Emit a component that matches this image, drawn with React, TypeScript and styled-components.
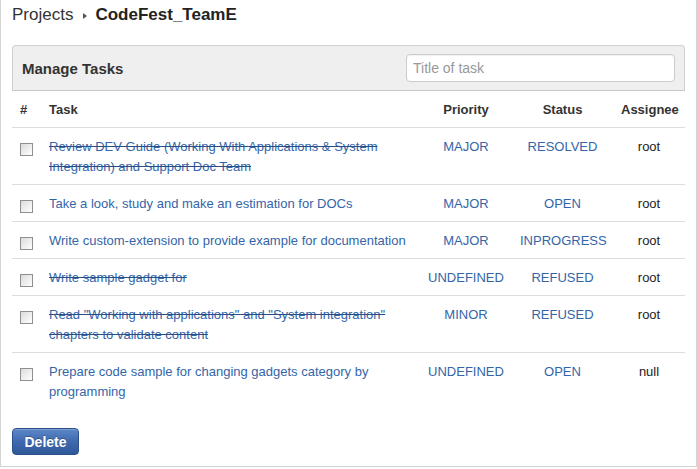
import styled, { createGlobalStyle } from 'styled-components';

const GlobalStyle = createGlobalStyle`
  html, body {
    margin: 0;
    padding: 0;
    background: #fff;
  }
  body {
    font-family: "Liberation Sans", Arial, sans-serif;
    color: #333;
  }
`;

const Frame = styled.div`
  box-sizing: border-box;
  width: 697px;
  height: 467px;
  border: 1px solid #d4d4d4;
  border-top: none;
  padding: 0 11px;
`;

const Breadcrumb = styled.div`
  display: flex;
  align-items: center;
  height: 20px;
  padding-top: 5px;
  margin-bottom: 20px;
  font-size: 17px;
  line-height: 20px;
`;

const Crumb = styled.span`
  color: #333;
`;

const Current = styled.span`
  font-weight: bold;
  color: #222;
`;

const Caret = styled.span`
  display: inline-block;
  width: 0;
  height: 0;
  margin: 1px 8px 0 10px;
  border-top: 3px solid transparent;
  border-bottom: 3px solid transparent;
  border-left: 4px solid #555;
`;

const PanelHeader = styled.div`
  display: flex;
  align-items: center;
  justify-content: space-between;
  height: 44px;
  padding: 0 9px;
  background: #efefef;
  border: 1px solid #d0d0d0;
  border-bottom-color: #c8c8c8;
  border-radius: 4px 4px 0 0;
`;

const PanelTitle = styled.h3`
  margin: 0;
  font-size: 15px;
  font-weight: bold;
  color: #333;
`;

const Search = styled.input`
  box-sizing: border-box;
  width: 269px;
  height: 28px;
  padding: 0 6px;
  border: 1px solid #ccc;
  border-radius: 4px;
  background: #fff;
  font-family: "Liberation Sans", Arial, sans-serif;
  font-size: 14px;
  color: #555;
  box-shadow: inset 0 1px 1px rgba(0, 0, 0, 0.05);
  &::placeholder {
    color: #999;
  }
`;

const Table = styled.table`
  width: 100%;
  table-layout: fixed;
  border-collapse: collapse;
  font-size: 13px;
  line-height: 20px;
`;

const Th = styled.th<{ $align?: string; $w?: number }>`
  box-sizing: border-box;
  padding: 9px 8px 7px;
  text-align: ${(p) => p.$align || 'left'};
  width: ${(p) => (p.$w ? `${p.$w}px` : 'auto')};
  font-weight: bold;
  color: #333;
  border-bottom: 1px solid #ddd;
`;

const Row = styled.tr<{ $last?: boolean }>`
  border-bottom: ${(p) => (p.$last ? 'none' : '1px solid #ddd')};
`;

const Td = styled.td<{ $align?: string }>`
  padding: 9px 8px 7px;
  vertical-align: top;
  text-align: ${(p) => p.$align || 'left'};
`;

const Check = styled.input`
  appearance: none;
  display: block;
  box-sizing: border-box;
  width: 13px;
  height: 13px;
  margin: 6px 0 0 0;
  border: 1px solid #8e8f8f;
  background: linear-gradient(135deg, #dcdcdc 0%, #f4f4f4 70%, #fff 100%);
`;

const TaskLink = styled.a<{ $done?: boolean }>`
  color: #3465a8;
  text-decoration: ${(p) => (p.$done ? 'line-through' : 'none')};
  text-decoration-color: #2a4f86;
`;

const Tag = styled.span`
  color: #3465a8;
`;

const Person = styled.span`
  color: #222;
`;

const DeleteButton = styled.button`
  margin-top: 19px;
  box-sizing: border-box;
  width: 67px;
  height: 27px;
  padding: 0;
  border: 1px solid #2b4f8a;
  border-radius: 4px;
  background: linear-gradient(to bottom, #5c88c8 0%, #3f69ae 50%, #2e5898 100%);
  color: #fff;
  font-family: "Liberation Sans", Arial, sans-serif;
  font-size: 14px;
  font-weight: bold;
  text-shadow: 0 -1px 0 rgba(0, 0, 0, 0.25);
  box-shadow: inset 0 1px 0 rgba(255, 255, 255, 0.2);
`;

const tasks = [
  {
    title: 'Review DEV Guide (Working With Applications & System Integration) and Support Doc Team',
    priority: 'MAJOR',
    status: 'RESOLVED',
    assignee: 'root',
    done: true,
  },
  {
    title: 'Take a look, study and make an estimation for DOCs',
    priority: 'MAJOR',
    status: 'OPEN',
    assignee: 'root',
    done: false,
  },
  {
    title: 'Write custom-extension to provide example for documentation',
    priority: 'MAJOR',
    status: 'INPROGRESS',
    assignee: 'root',
    done: false,
  },
  {
    title: 'Write sample gadget for',
    priority: 'UNDEFINED',
    status: 'REFUSED',
    assignee: 'root',
    done: true,
  },
  {
    title: 'Read "Working with applications" and "System integration" chapters to validate content',
    priority: 'MINOR',
    status: 'REFUSED',
    assignee: 'root',
    done: true,
  },
  {
    title: 'Prepare code sample for changing gadgets category by programming',
    priority: 'UNDEFINED',
    status: 'OPEN',
    assignee: 'null',
    done: false,
  },
];

export default function App() {
  return (
    <>
      <GlobalStyle />
      <Frame>
        <Breadcrumb>
          <Crumb>Projects</Crumb>
          <Caret />
          <Current>CodeFest_TeamE</Current>
        </Breadcrumb>
        <PanelHeader>
          <PanelTitle>Manage Tasks</PanelTitle>
          <Search placeholder="Title of task" />
        </PanelHeader>
        <Table>
          <thead>
            <tr>
              <Th $w={29}>#</Th>
              <Th>Task</Th>
              <Th $align="center" $w={92}>Priority</Th>
              <Th $align="center" $w={101}>Status</Th>
              <Th $align="center" $w={72}>Assignee</Th>
            </tr>
          </thead>
          <tbody>
            {tasks.map((t, i) => (
              <Row key={i} $last={i === tasks.length - 1}>
                <Td>
                  <Check type="checkbox" />
                </Td>
                <Td>
                  <TaskLink href="#" $done={t.done}>
                    {t.title}
                  </TaskLink>
                </Td>
                <Td $align="center">
                  <Tag>{t.priority}</Tag>
                </Td>
                <Td $align="center">
                  <Tag>{t.status}</Tag>
                </Td>
                <Td $align="center">
                  <Person>{t.assignee}</Person>
                </Td>
              </Row>
            ))}
          </tbody>
        </Table>
        <DeleteButton>Delete</DeleteButton>
      </Frame>
    </>
  );
}
